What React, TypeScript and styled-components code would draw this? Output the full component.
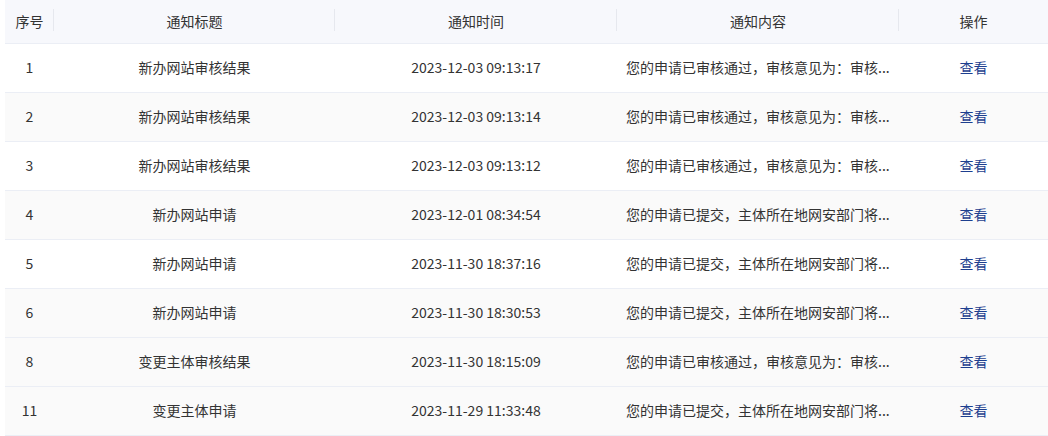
import React from 'react'
import styled, { createGlobalStyle } from 'styled-components'

const GlobalStyle = createGlobalStyle`
  html, body {
    margin: 0;
    padding: 0;
    background: #fff;
  }
  body {
    font-family: "Noto Sans CJK SC", "Noto Sans", sans-serif;
    font-size: 14px;
    color: #333;
  }
`

type Notice = {
  id: number
  title: string
  time: string
  content: string
}

// the list shows a shortened summary of each notice
const notices: Notice[] = [
  { id: 1, title: '新办网站审核结果', time: '2023-12-03 09:13:17', content: '您的申请已审核通过，审核意见为：审核...' },
  { id: 2, title: '新办网站审核结果', time: '2023-12-03 09:13:14', content: '您的申请已审核通过，审核意见为：审核...' },
  { id: 3, title: '新办网站审核结果', time: '2023-12-03 09:13:12', content: '您的申请已审核通过，审核意见为：审核...' },
  { id: 4, title: '新办网站申请', time: '2023-12-01 08:34:54', content: '您的申请已提交，主体所在地网安部门将...' },
  { id: 5, title: '新办网站申请', time: '2023-11-30 18:37:16', content: '您的申请已提交，主体所在地网安部门将...' },
  { id: 6, title: '新办网站申请', time: '2023-11-30 18:30:53', content: '您的申请已提交，主体所在地网安部门将...' },
  { id: 8, title: '变更主体审核结果', time: '2023-11-30 18:15:09', content: '您的申请已审核通过，审核意见为：审核...' },
  { id: 11, title: '变更主体申请', time: '2023-11-29 11:33:48', content: '您的申请已提交，主体所在地网安部门将...' },
]

const Wrapper = styled.div`
  padding-left: 5px;
`

const Table = styled.table`
  width: 1043px;
  border-collapse: collapse;
  table-layout: fixed;
`

const HeadCell = styled.th`
  position: relative;
  height: 41px;
  padding: 0 0 2px;
  background: #f7f8fc;
  border-bottom: 1px solid #ebeef5;
  font-weight: 400;
  color: #333;
  text-align: center;

  &:not(:last-child)::after {
    content: '';
    position: absolute;
    right: 0;
    top: 9px;
    height: 22px;
    width: 1px;
    background: #e6e8ee;
  }
`

const Row = styled.tr<{ $shade: boolean }>`
  background: ${(p) => (p.$shade ? '#fafafa' : '#fff')};
`

const Cell = styled.td<{ $left?: boolean }>`
  height: 45px;
  padding: ${(p) => (p.$left ? '0 0 3px 9px' : '0 0 3px')};
  border-bottom: 1px solid #ebeef5;
  text-align: ${(p) => (p.$left ? 'left' : 'center')};
  white-space: nowrap;
  color: #333;
`

const ViewLink = styled.a`
  color: #1d3f8f;
  text-decoration: none;
  cursor: pointer;
`

const App = () => {
  return (
    <Wrapper>
      <GlobalStyle />
      <Table>
        <colgroup>
          <col style={{ width: 49 }} />
          <col style={{ width: 281 }} />
          <col style={{ width: 282 }} />
          <col style={{ width: 282 }} />
          <col style={{ width: 149 }} />
        </colgroup>
        <thead>
          <tr>
            <HeadCell>序号</HeadCell>
            <HeadCell>通知标题</HeadCell>
            <HeadCell>通知时间</HeadCell>
            <HeadCell>通知内容</HeadCell>
            <HeadCell>操作</HeadCell>
          </tr>
        </thead>
        <tbody>
          {notices.map((n, i) => (
            <Row key={n.id} $shade={i % 2 === 1 || i === 6}>
              <Cell>{n.id}</Cell>
              <Cell>{n.title}</Cell>
              <Cell>{n.time}</Cell>
              <Cell $left>{n.content}</Cell>
              <Cell>
                <ViewLink>查看</ViewLink>
              </Cell>
            </Row>
          ))}
        </tbody>
      </Table>
    </Wrapper>
  )
}

export default App
